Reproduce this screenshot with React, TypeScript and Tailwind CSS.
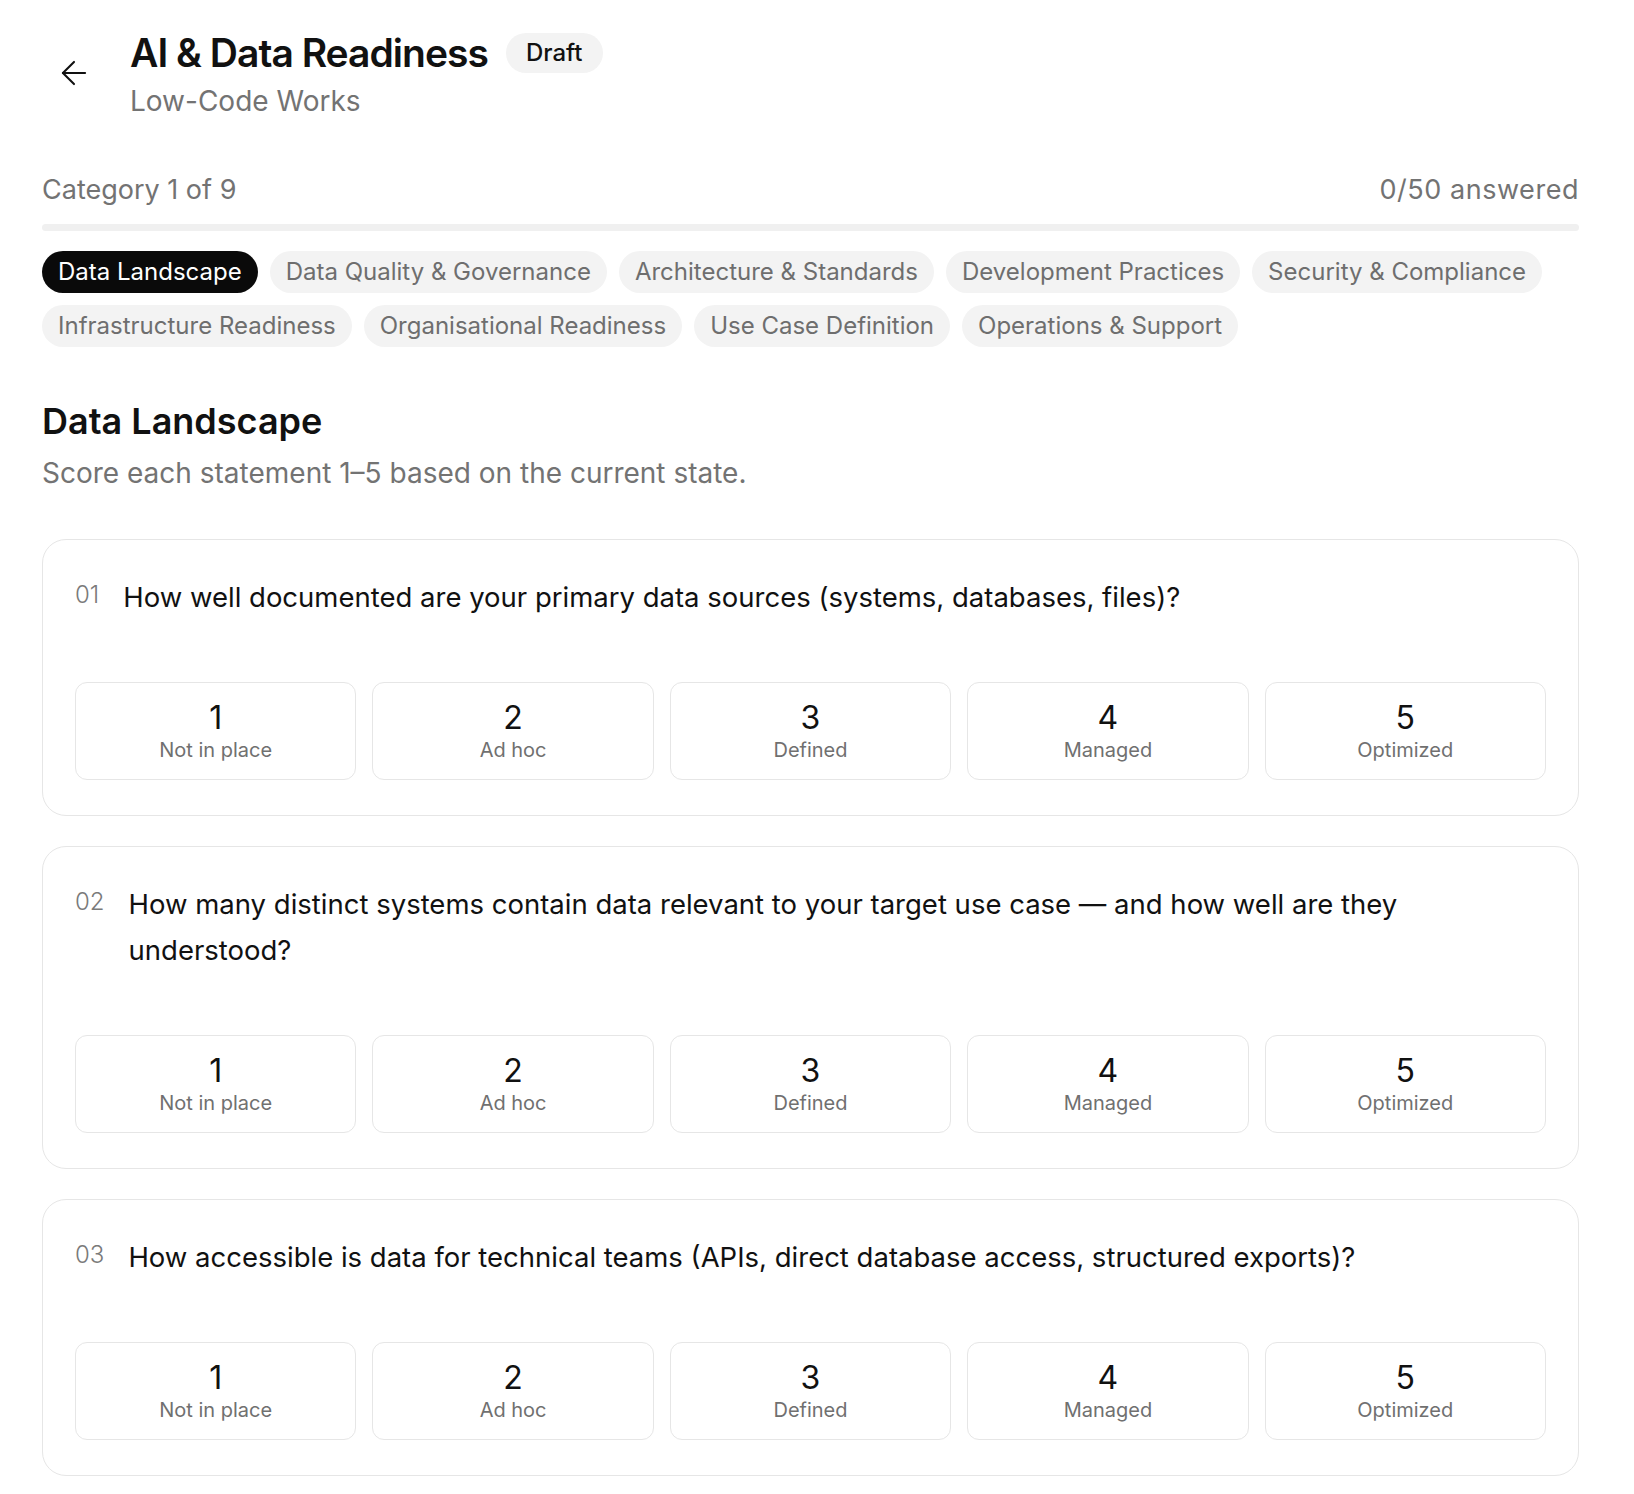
import { ArrowLeft } from "lucide-react";

const categories = [
  "Data Landscape",
  "Data Quality & Governance",
  "Architecture & Standards",
  "Development Practices",
  "Security & Compliance",
  "Infrastructure Readiness",
  "Organisational Readiness",
  "Use Case Definition",
  "Operations & Support",
];

const scale = [
  { value: 1, label: "Not in place" },
  { value: 2, label: "Ad hoc" },
  { value: 3, label: "Defined" },
  { value: 4, label: "Managed" },
  { value: 5, label: "Optimized" },
];

const questions = [
  "How well documented are your primary data sources (systems, databases, files)?",
  "How many distinct systems contain data relevant to your target use case — and how well are they understood?",
  "How accessible is data for technical teams (APIs, direct database access, structured exports)?",
  "How consistently is data ownership assigned across the systems that hold it?",
  "How well are data flows between systems mapped and monitored?",
];

function QuestionCard({ index, text }: { index: number; text: string }) {
  return (
    <div className="rounded-3xl border border-[#e6e6e6] bg-white px-8 pt-[34px] pb-[35px]">
      <div className="flex items-start gap-6">
        <span className="pt-[9px] text-[24px] leading-none text-[#7a7a7a] font-light">
          {String(index + 1).padStart(2, "0")}
        </span>
        <p className="text-[27.5px] leading-[46px] text-[#111]">{text}</p>
      </div>
      <div className="mt-[62px] grid grid-cols-5 gap-4">
        {scale.map((s) => (
          <button
            key={s.value}
            className="flex h-[98px] flex-col items-center justify-center rounded-xl border border-[#e6e6e6] bg-white"
          >
            <span className="text-[32px] leading-[38px] text-[#111]">{s.value}</span>
            <span className="text-[20px] leading-[26px] text-[#707070]">{s.label}</span>
          </button>
        ))}
      </div>
    </div>
  );
}

export default function App() {
  return (
    <div
      className="min-h-screen bg-white pl-[42px] pr-[55px] pt-[27px] pb-16 text-[#111]"
      style={{ fontFamily: "Inter, 'Noto Sans', sans-serif" }}
    >
      <header className="flex items-center">
        <button className="ml-[13px] mr-[37px] flex h-[38px] w-[38px] shrink-0 items-center justify-center text-[#111]">
          <ArrowLeft size={38} strokeWidth={1.3} />
        </button>
        <div>
          <div className="flex items-center gap-[18px]">
            <h1 className="text-[39px] font-semibold leading-[52px] tracking-tight">AI &amp; Data Readiness</h1>
            <span className="rounded-full bg-[#f3f3f3] px-5 py-[6px] text-[24px] font-medium leading-[28px]">Draft</span>
          </div>
          <p className="mt-1 text-[28px] leading-[36px] text-[#737373]">Low-Code Works</p>
        </div>
      </header>

      <div className="mt-[53px] flex items-center justify-between text-[27px] leading-[36px] text-[#737373]">
        <span>Category 1 of 9</span>
        <span className="tracking-[0.02em]">0/50 answered</span>
      </div>
      <div className="mt-4 h-[7px] w-full rounded-full bg-[#f0f0f0]" />

      <div className="mt-5 flex flex-wrap gap-3">
        {categories.map((c, i) => (
          <button
            key={c}
            className={
              i === 0
                ? "h-[42px] rounded-full bg-[#0a0a0a] px-4 text-[24px] text-white"
                : "h-[42px] rounded-full bg-[#f3f3f3] px-4 text-[24px] text-[#6e6e6e]"
            }
          >
            {c}
          </button>
        ))}
      </div>

      <h2 className="mt-[52px] text-[36px] font-semibold leading-[44px]">Data Landscape</h2>
      <p className="mt-3 text-[28px] leading-[36px] text-[#737373]">
        Score each statement 1–5 based on the current state.
      </p>

      <div className="mt-[48px] flex flex-col gap-[30px]">
        {questions.map((q, i) => (
          <QuestionCard key={i} index={i} text={q} />
        ))}
      </div>
    </div>
  );
}
